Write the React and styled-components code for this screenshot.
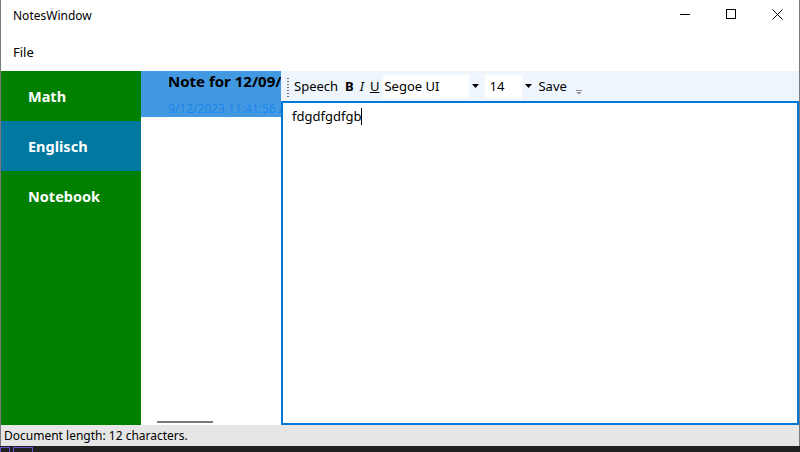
import React from "react";
import styled, { createGlobalStyle } from "styled-components";

const Global = createGlobalStyle`
  html, body { margin: 0; padding: 0; background: #ffffff; }
  body { font-family: "Noto Sans", "Open Sans", sans-serif; }
  #root { width: 800px; height: 452px; }
`;

const Window = styled.div`
  width: 800px;
  height: 452px;
  display: flex;
  flex-direction: column;
  box-sizing: border-box;
  overflow: hidden;
  background: #ffffff;
`;

const Frame = styled.div`
  flex: 1;
  display: flex;
  flex-direction: column;
  border-left: 1px solid #7a7a7a;
  border-right: 1px solid #7a7a7a;
  min-height: 0;
`;

const TitleBar = styled.div`
  height: 32px;
  display: flex;
  align-items: center;
  justify-content: space-between;
  flex-shrink: 0;
`;

const Title = styled.div`
  font-size: 12px;
  color: #000;
  padding-left: 12px;
  margin-top: -2px;
`;

const Controls = styled.div`
  display: flex;
  height: 32px;
  margin-right: -1px;
`;

const CtrlButton = styled.div`
  width: 46px;
  height: 32px;
  display: flex;
  align-items: center;
  justify-content: center;
  margin-top: -2px;
`;

const MenuBar = styled.div`
  height: 39px;
  display: flex;
  align-items: center;
  flex-shrink: 0;
`;

const MenuItem = styled.div`
  font-size: 13px;
  color: #000;
  padding-left: 12px;
  margin-top: 1px;
`;

const Main = styled.div`
  flex: 1;
  display: flex;
  min-height: 0;
`;

const Sidebar = styled.div`
  width: 140px;
  background: #008000;
  display: flex;
  flex-direction: column;
  flex-shrink: 0;
`;

const NavItem = styled.div`
  height: 50px;
  display: flex;
  align-items: center;
  padding-left: 27px;
  background: ${(p) => (p.$active ? "#0078a0" : "#008000")};
  color: #ffffff;
  font-weight: 700;
  font-size: 14.5px;
`;

const NoteList = styled.div`
  width: 140px;
  position: relative;
  overflow: hidden;
  flex-shrink: 0;
`;

const NoteItem = styled.div`
  height: 46px;
  background: #4299e1;
  display: flex;
  flex-direction: column;
  padding-left: 27px;
  white-space: nowrap;
  overflow: hidden;
`;

const NoteTitle = styled.div`
  font-weight: 700;
  font-size: 15px;
  line-height: 20px;
  color: #000;
  overflow: hidden;
`;

const NoteDate = styled.div`
  font-size: 12px;
  line-height: 16px;
  color: #1c86ee;
  margin-top: 10px;
  overflow: hidden;
`;

const ScrollThumb = styled.div`
  position: absolute;
  left: 16px;
  bottom: 2px;
  width: 56px;
  height: 2px;
  background: #7a7a7a;
`;

const EditorPane = styled.div`
  flex: 1;
  display: flex;
  flex-direction: column;
  min-width: 0;
`;

const Toolbar = styled.div`
  height: 30px;
  background: #eef5fc;
  display: flex;
  align-items: center;
  flex-shrink: 0;
  font-size: 13px;
  color: #000;
`;

const Gripper = styled.div`
  width: 2px;
  height: 20px;
  margin-left: 6px;
  margin-right: 2px;
  background-image: radial-gradient(circle, #6d6d6d 0.8px, transparent 0.9px);
  background-size: 2px 3px;
  margin-top: 1px;
`;

const ToolText = styled.span`
  padding: 0 3px;
  font-weight: ${(p) => (p.$bold ? 700 : 400)};
  font-style: ${(p) => (p.$italic ? "italic" : "normal")};
  text-decoration: ${(p) => (p.$underline ? "underline" : "none")};
  margin-right: ${(p) => p.$mr || 0}px;
`;

const Combo = styled.div`
  height: 25px;
  width: ${(p) => p.$w}px;
  background: #ffffff;
  display: flex;
  align-items: center;
  margin-left: ${(p) => p.$ml || 0}px;
  margin-right: ${(p) => p.$mr || 0}px;
  box-sizing: border-box;
  border: 1px solid #f4f8fc;
`;

const ComboText = styled.div`
  flex: 1;
  padding-left: ${(p) => p.$pl || 2}px;
  font-size: 13px;
`;

const ComboArrow = styled.div`
  width: 12px;
  height: 100%;
  background: #eef5fc;
  display: flex;
  align-items: center;
  justify-content: center;
`;

const Overflow = styled.div`
  margin-left: 6px;
  margin-top: 12px;
  display: flex;
`;

const Editor = styled.div`
  flex: 1;
  border: 2px solid #0078d7;
  background: #fff;
  padding: 4px 9px;
  font-size: 13px;
  color: #000;
  display: flex;
  align-items: flex-start;
`;

const Caret = styled.span`
  display: inline-block;
  width: 1px;
  height: 17px;
  background: #000;
  margin-top: 1px;
`;

const StatusBar = styled.div`
  height: 21px;
  background: #e6e6e6;
  display: flex;
  align-items: center;
  padding-left: 3px;
  font-size: 12px;
  color: #000;
  flex-shrink: 0;
`;

const Taskbar = styled.div`
  height: 6px;
  background: #202020;
  display: flex;
  align-items: flex-end;
  flex-shrink: 0;
`;

const TaskIcon = styled.div`
  width: ${(p) => p.$w}px;
  height: 5px;
  margin-left: ${(p) => p.$ml}px;
  border: 1px solid ${(p) => p.$c};
  border-bottom: none;
  box-sizing: border-box;
`;

const Arrow = () => (
  <svg width="7" height="4" viewBox="0 0 7 4">
    <path d="M0 0h7L3.5 4z" fill="#000" />
  </svg>
);

export default function App() {
  return (
    <Window>
      <Global />
      <Frame>
        <TitleBar>
          <Title>NotesWindow</Title>
          <Controls>
            <CtrlButton>
              <svg width="10" height="10" viewBox="0 0 10 10">
                <path d="M0 5.5h10" stroke="#000" strokeWidth="1" />
              </svg>
            </CtrlButton>
            <CtrlButton>
              <svg width="10" height="10" viewBox="0 0 10 10">
                <rect x="0.5" y="0.5" width="9" height="9" fill="none" stroke="#000" strokeWidth="1" />
              </svg>
            </CtrlButton>
            <CtrlButton>
              <svg width="11" height="11" viewBox="0 0 11 11">
                <path d="M0.5 0.5l10 10M10.5 0.5l-10 10" stroke="#000" strokeWidth="1" />
              </svg>
            </CtrlButton>
          </Controls>
        </TitleBar>
        <MenuBar>
          <MenuItem>File</MenuItem>
        </MenuBar>
        <Main>
          <Sidebar>
            <NavItem>Math</NavItem>
            <NavItem $active>Englisch</NavItem>
            <NavItem>Notebook</NavItem>
          </Sidebar>
          <NoteList>
            <NoteItem>
              <NoteTitle>Note for 12/09/2023</NoteTitle>
              <NoteDate>9/12/2023 11:41:56 AM</NoteDate>
            </NoteItem>
            <ScrollThumb />
          </NoteList>
          <EditorPane>
            <Toolbar>
              <Gripper />
              <ToolText $mr={1}>Speech</ToolText>
              <ToolText $bold>B</ToolText>
              <ToolText $italic>I</ToolText>
              <ToolText $underline>U</ToolText>
              <Combo $w={100}>
                <ComboText $pl={1}>Segoe UI</ComboText>
                <ComboArrow><Arrow /></ComboArrow>
              </Combo>
              <Combo $w={51} $ml={2}>
                <ComboText $pl={4}>14</ComboText>
                <ComboArrow><Arrow /></ComboArrow>
              </Combo>
              <ToolText>Save</ToolText>
              <Overflow>
                <svg width="6" height="5" viewBox="0 0 6 5">
                  <path d="M0 0.5h6" stroke="#888" strokeWidth="1" />
                  <path d="M0.5 2h5L3 4.5z" fill="#888" />
                </svg>
              </Overflow>
            </Toolbar>
            <Editor>
              <span>fdgdfgdfgb</span>
              <Caret />
            </Editor>
          </EditorPane>
        </Main>
        <StatusBar>Document length: 12 characters.</StatusBar>
      </Frame>
      <Taskbar>
        <TaskIcon $w={10} $ml={0} $c="#6b4fd0" />
        <TaskIcon $w={20} $ml={3} $c="#6b4fd0" />
      </Taskbar>
    </Window>
  );
}
